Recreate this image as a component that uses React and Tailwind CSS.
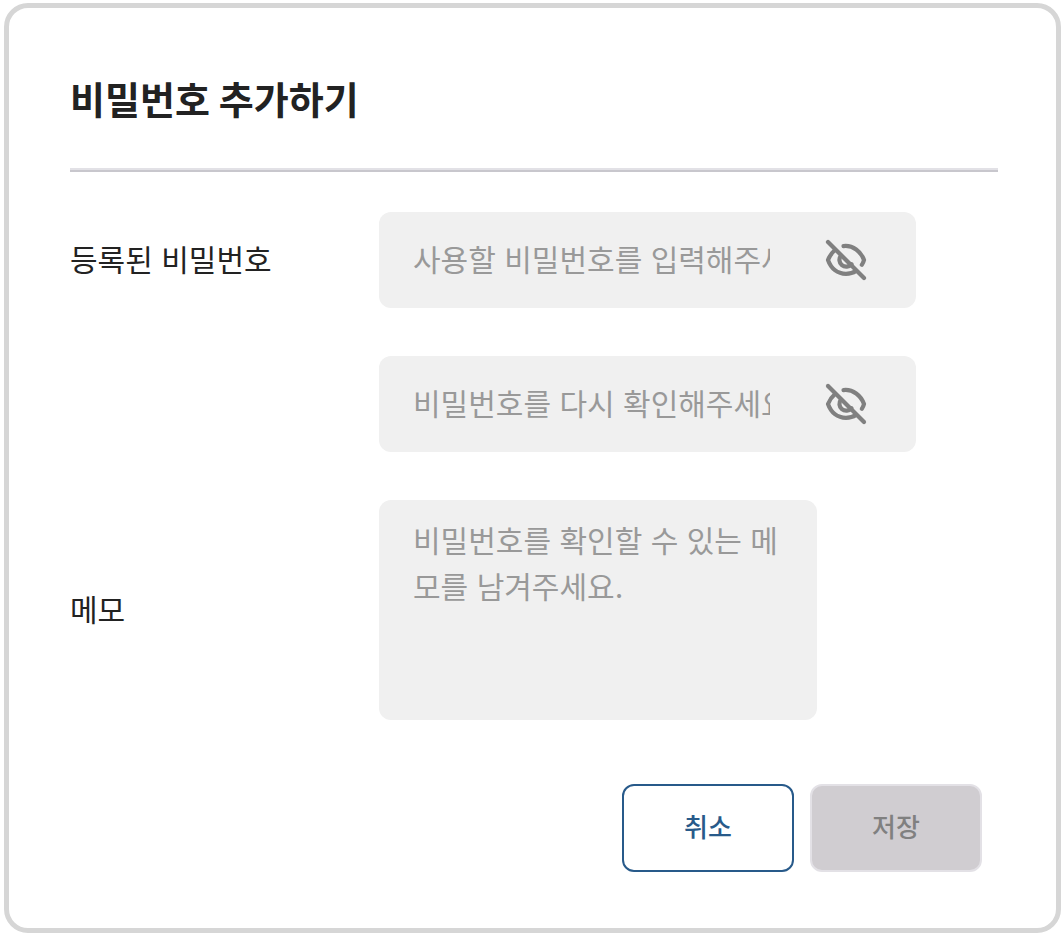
import { useState } from "react";

const EyeOffIcon = () => (
  <svg className="size-12" viewBox="0 0 48 48" fill="none" stroke="currentColor" strokeWidth="4.2" strokeLinecap="round" strokeLinejoin="round" aria-hidden="true">
    <path d="M6 6L42 42" />
    <path d="M21.5 10.1C31 9 39 15.5 42 24C41.6 25.7 40.8 27.3 39.8 28.8" />
    <path d="M13 14C9.8 16.8 7.5 20.2 6 24C9 32.5 15.5 37.8 24 37.8C27.5 37.8 31 37 34 35" />
    <path d="M19 19.5A6.5 6.5 0 0 0 29.5 28.2" />
  </svg>
);

const PasswordField = ({ id, label, placeholder, value, onChange }) => {
  const [visible, setVisible] = useState(false);

  return (
    <div className="flex h-24 w-[537px] max-w-full items-center rounded-xl bg-[#f0f0f0] pl-[34px] pr-[46px]">
      <input
        id={id}
        type={visible ? "text" : "password"}
        aria-label={label}
        placeholder={placeholder}
        value={value}
        onChange={(e) => onChange(e.target.value)}
        className="h-12 min-w-0 flex-1 bg-transparent text-[30px] leading-12 outline-none placeholder:text-[#999999]"
      />
      <button type="button" aria-label="비밀번호 표시" onClick={() => setVisible(!visible)} className="ml-[52px] shrink-0 text-[#808080]">
        <EyeOffIcon />
      </button>
    </div>
  );
};

const App = () => {
  const [password, setPassword] = useState("");
  const [confirm, setConfirm] = useState("");
  const [memo, setMemo] = useState("");

  const canSave = password !== "" && password === confirm;

  const handleReset = () => {
    setPassword("");
    setConfirm("");
    setMemo("");
  };

  return (
    <div className="bg-white p-[3px] pl-1 font-[Inter,'Noto_Sans_CJK_KR',sans-serif] text-[#222222]">
      <form
        onSubmit={(e) => e.preventDefault()}
        className="rounded-3xl border-5 border-[#d6d6d6] pt-16 pr-[58px] pb-14 pl-[61px]"
      >
        <h1 className="text-[38px] leading-14 font-bold">비밀번호 추가하기</h1>
        <hr className="mt-10 h-1 border-t-2 border-b-2 border-t-[#e2e1e6] border-b-[#c8c7cd]" />

        {/* 비밀번호 */}
        <div className="mt-10 flex items-start">
          <label htmlFor="password" className="w-[309px] shrink-0 text-[30px] leading-24">등록된 비밀번호</label>
          <div className="flex min-w-0 flex-1 flex-col gap-12">
            <PasswordField id="password" placeholder="사용할 비밀번호를 입력해주세요." value={password} onChange={setPassword} />
            <PasswordField id="confirm" label="비밀번호 확인" placeholder="비밀번호를 다시 확인해주세요." value={confirm} onChange={setConfirm} />
          </div>
        </div>

        {/* 메모 */}
        <div className="mt-12 flex items-center">
          <label htmlFor="memo" className="w-[309px] shrink-0 text-[30px] leading-12">메모</label>
          <textarea
            id="memo"
            placeholder="비밀번호를 확인할 수 있는 메모를 남겨주세요."
            value={memo}
            onChange={(e) => setMemo(e.target.value)}
            className="h-[220px] w-[438px] resize-none rounded-xl bg-[#f0f0f0] px-[34px] py-[18px] text-[30px] leading-[46px] break-all outline-none placeholder:text-[#999999]"
          />
        </div>

        <div className="mt-16 flex justify-end gap-4 pr-4 text-[26px] leading-10 font-medium">
          <button type="button" onClick={handleReset} className="h-22 w-[172px] rounded-xl border-2 border-[#285a8a] bg-white text-[#285a8a]">
            취소
          </button>
          <button type="submit" disabled={!canSave} className="h-22 w-[172px] rounded-xl border-2 border-[#e3e1e6] bg-[#d0cdd1] text-[#808080]">
            저장
          </button>
        </div>
      </form>
    </div>
  );
};

export default App;
